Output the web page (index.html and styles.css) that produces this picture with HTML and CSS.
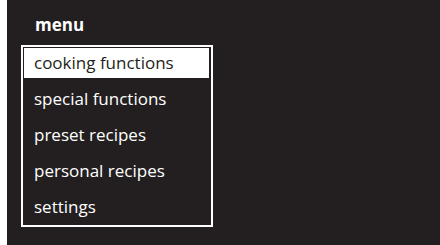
FILE: index.html
```html
<!DOCTYPE html>
<html>
<head>
<meta charset="utf-8">
<link rel="stylesheet" href="styles.css">
</head>
<body>
<div class="screen">
  <div class="title">menu</div>
  <ul class="menu">
    <li class="item selected">cooking functions</li>
    <li class="item">special functions</li>
    <li class="item">preset recipes</li>
    <li class="item">personal recipes</li>
    <li class="item">settings</li>
  </ul>
</div>
</body>
</html>
```
FILE: styles.css
```css
html, body {
  margin: 0;
  padding: 0;
  background: #ffffff;
}
.screen {
  margin-left: 7px;
  height: 245px;
  background: #231f20;
  color: #ffffff;
  font-family: "Open Sans", "Liberation Sans", sans-serif;
  padding: 12px 0 0 14px;
  box-sizing: border-box;
  overflow: hidden;
}
.title {
  font-weight: 700;
  font-size: 17px;
  line-height: 26px;
  margin-left: 14px;
  height: 33px;
}
.menu {
  list-style: none;
  margin: 0;
  width: 192px;
  box-sizing: border-box;
  border: 2px solid #ffffff;
  padding: 1px 2px 3px 1px;
  display: flex;
  flex-direction: column;
  gap: 6px;
}
.item {
  height: 30px;
  line-height: 30px;
  padding-left: 10px;
  font-size: 17px;
  white-space: nowrap;
}
.item.selected {
  background: #ffffff;
  color: #231f20;
}
```
